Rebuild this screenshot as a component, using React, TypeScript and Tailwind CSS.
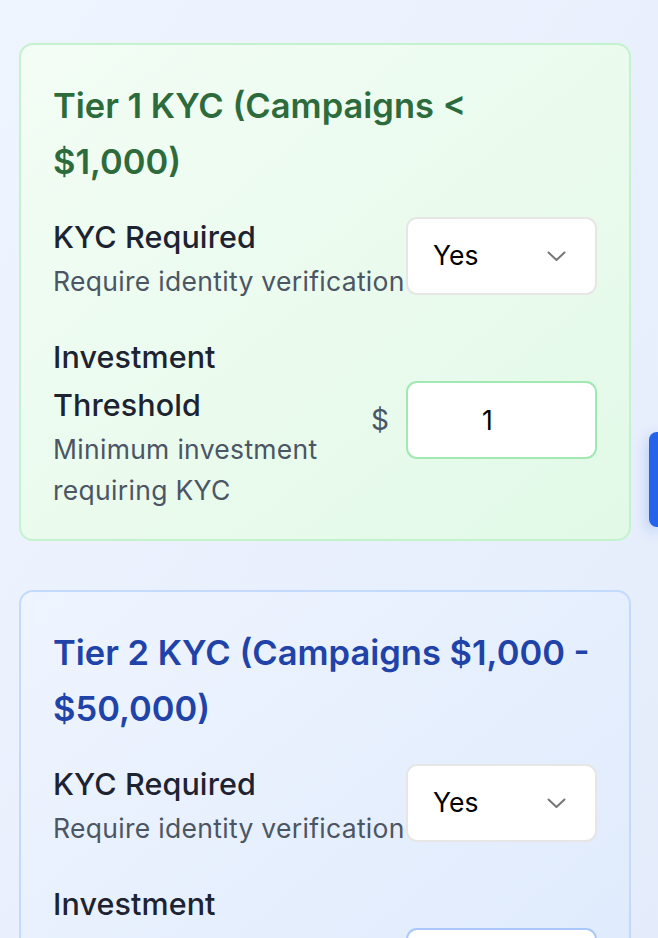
import { useState } from "react";

type Tier = {
  title: string;
  tone: "green" | "blue";
  required: string;
  threshold: string;
};

const tiers: Tier[] = [
  { title: "Tier 1 KYC (Campaigns < $1,000)", tone: "green", required: "Yes", threshold: "1" },
  { title: "Tier 2 KYC (Campaigns $1,000 - $50,000)", tone: "blue", required: "Yes", threshold: "1000" },
];

const toneClasses = {
  green: {
    card: "border-[#c4f2cf] bg-gradient-to-br from-[#f3fdf5] to-[#e2f9e7]",
    title: "text-[#2e6b3c]",
    input: "border-[#a0e9b3]",
  },
  blue: {
    card: "border-[#c3dafc] bg-gradient-to-br from-[#eff5ff] to-[#dde9fc]",
    title: "text-[#1f43a8]",
    input: "border-[#a9c8f9]",
  },
};

function Chevron() {
  return (
    <svg width="19" height="11" viewBox="0 0 19 11" fill="none">
      <path d="M1.5 1.5L9.5 9L17.5 1.5" stroke="#767676" strokeWidth="2" strokeLinecap="round" strokeLinejoin="round" />
    </svg>
  );
}

function TierCard({ tier }: { tier: Tier }) {
  const tone = toneClasses[tier.tone];
  const [value, setValue] = useState(tier.threshold);

  return (
    <section className={`rounded-[14px] border-2 px-8 pb-[28px] pt-[33px] ${tone.card}`}>
      <h3 className={`text-[34.5px] font-semibold leading-[56px] ${tone.title}`}>{tier.title}</h3>

      <div className="mt-[22.5px] flex items-center">
        <div className="min-w-0 flex-1">
          <p className="text-[30.5px] font-medium leading-[48px] tracking-[0.1px] text-[#1d2331]">KYC Required</p>
          <p className="whitespace-nowrap text-[26.5px] leading-[41px] tracking-[0.3px] text-[#4b5563]">
            Require identity verification
          </p>
        </div>
        <div className="-mt-[2px] flex h-[78px] w-[191px] shrink-0 items-center justify-between rounded-[11px] border-2 border-[#e6e6e6] bg-white pl-[25px] pr-[29px]">
          <span className="text-[26.5px] text-black">{tier.required}</span>
          <Chevron />
        </div>
      </div>

      <div className="mt-[31.5px] flex items-center">
        <div className="mr-[20px] min-w-0 flex-1">
          <p className="text-[30.5px] font-medium leading-[48px] tracking-[0.1px] text-[#1d2331]">Investment Threshold</p>
          <p className="text-[26.5px] leading-[41px] tracking-[0.3px] text-[#4b5563]">Minimum investment requiring KYC</p>
        </div>
        <span className="-mt-[4px] mr-[17px] text-[28px] text-[#4b5563]">$</span>
        <input
          value={value}
          onChange={(event) => setValue(event.target.value)}
          className={`-mt-[4px] h-[78px] w-[191px] shrink-0 rounded-[11px] border-2 bg-white pr-[28px] text-center text-[26.5px] text-black outline-none ${tone.input}`}
        />
      </div>
    </section>
  );
}

export default function App() {
  return (
    <div className="relative h-[938px] overflow-hidden bg-gradient-to-br from-[#eff5ff] to-[#e4ecfb] pl-[19px] pr-[27px] pt-[43px] font-['Inter','Noto_Sans',sans-serif]">
      <div className="flex flex-col gap-[49px]">
        {tiers.map((tier) => (
          <TierCard key={tier.title} tier={tier} />
        ))}
      </div>
      <div className="absolute right-0 top-[432px] h-[95px] w-[9px] rounded-l-[8px] bg-[#2563eb] shadow-[0_4px_14px_rgba(37,99,235,0.35)]" />
    </div>
  );
}
